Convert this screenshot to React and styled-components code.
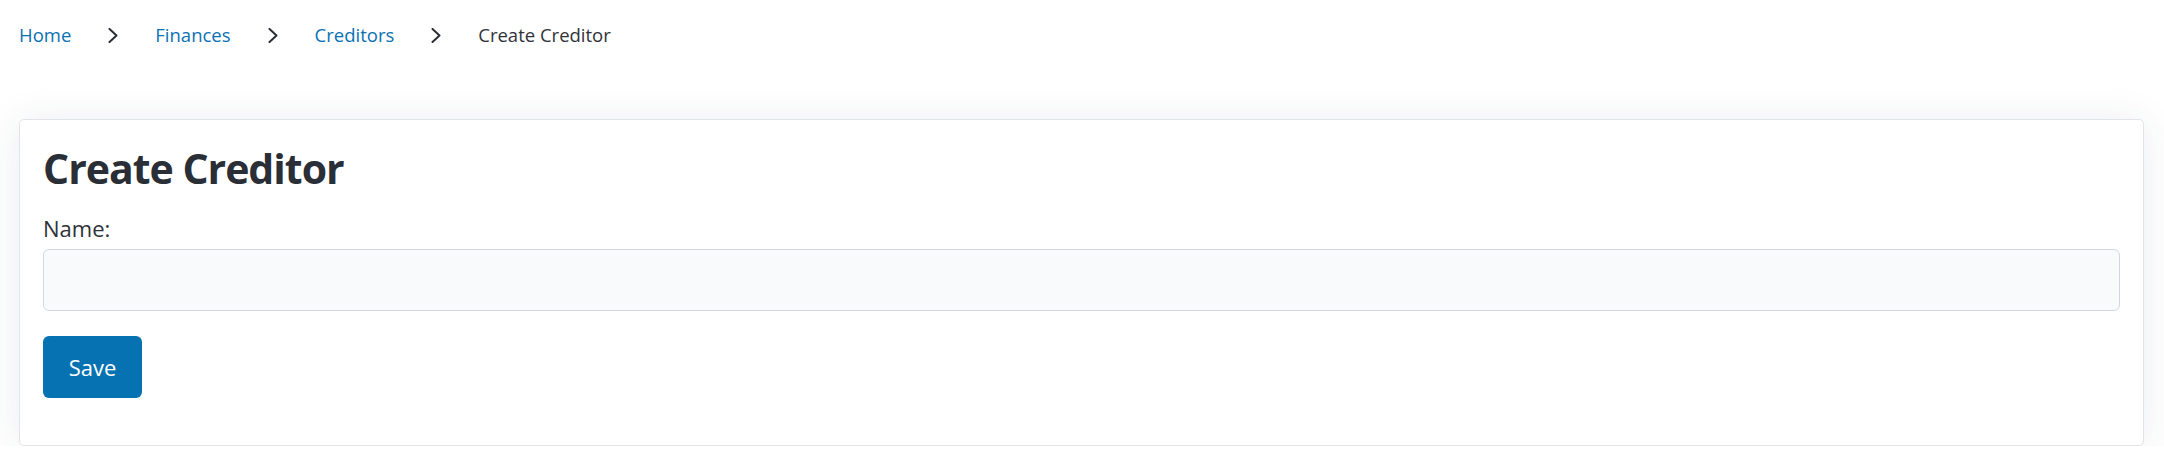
import styled, { createGlobalStyle } from 'styled-components';

const GlobalStyle = createGlobalStyle`
    html, body {
        margin: 0;
        padding: 0;
        background: #ffffff;
        font-family: "Open Sans", "Noto Sans", sans-serif;
        color: #2b3038;
    }
`;

const Page = styled.div`
    padding: 0 20px 0 19px;
`;

const Crumbs = styled.nav`
    display: flex;
    align-items: center;
    gap: 37px;
    height: 69px;
    font-size: 18.5px;

    a {
        color: #0a71b3;
        text-decoration: none;
    }

    span {
        color: #2f3339;
    }

    svg {
        margin-top: 2px;
    }
`;

const Chevron = () => (
    <svg width="10" height="15" viewBox="0 0 10 15" fill="none">
        <polyline points="1.5,1 8.5,7.5 1.5,14" stroke="#2b2f35" strokeWidth="2" strokeLinecap="round" strokeLinejoin="round" />
    </svg>
);

const Card = styled.section`
    margin-top: 50px;
    background: #fff;
    border: 1px solid #e2e4ea;
    border-radius: 5px;
    box-shadow: 0 2px 40px rgba(40, 50, 100, 0.09);
    padding: 24px 23px 47px;

    h1 {
        margin: 0 0 21px;
        font-size: 41px;
        font-weight: 700;
        letter-spacing: -1px;
        line-height: 1.2;
        color: #2a2f37;
    }
`;

const Label = styled.label`
    display: block;
    font-size: 22px;
    line-height: 1.3;
    color: #2d3239;
    margin-bottom: 6px;
`;

const Input = styled.input`
    display: block;
    box-sizing: border-box;
    width: 100%;
    height: 62px;
    background: #f9fafb;
    border: 1px solid #d3d6de;
    border-radius: 6px;
    font: inherit;
    font-size: 22px;
    padding: 0 16px;
    outline: none;
`;

const Button = styled.button`
    margin-top: 25px;
    height: 62px;
    width: 99px;
    border: none;
    border-radius: 6px;
    background: #0672b1;
    color: #fff;
    font-family: inherit;
    font-size: 22px;
    cursor: pointer;
`;

const crumbs = [
    { label: 'Home', href: '#' },
    { label: 'Finances', href: '#' },
    { label: 'Creditors', href: '#' },
];

export default function App() {
    return (
        <>
            <GlobalStyle />
            <Page>
                <Crumbs>
                    {crumbs.map((c) => (
                        <>
                            <a key={c.label} href={c.href}>{c.label}</a>
                            <Chevron />
                        </>
                    ))}
                    <span>Create Creditor</span>
                </Crumbs>
                <Card>
                    <h1>Create Creditor</h1>
                    <Label htmlFor="name">Name:</Label>
                    <Input id="name" type="text" />
                    <Button>Save</Button>
                </Card>
            </Page>
        </>
    );
}
